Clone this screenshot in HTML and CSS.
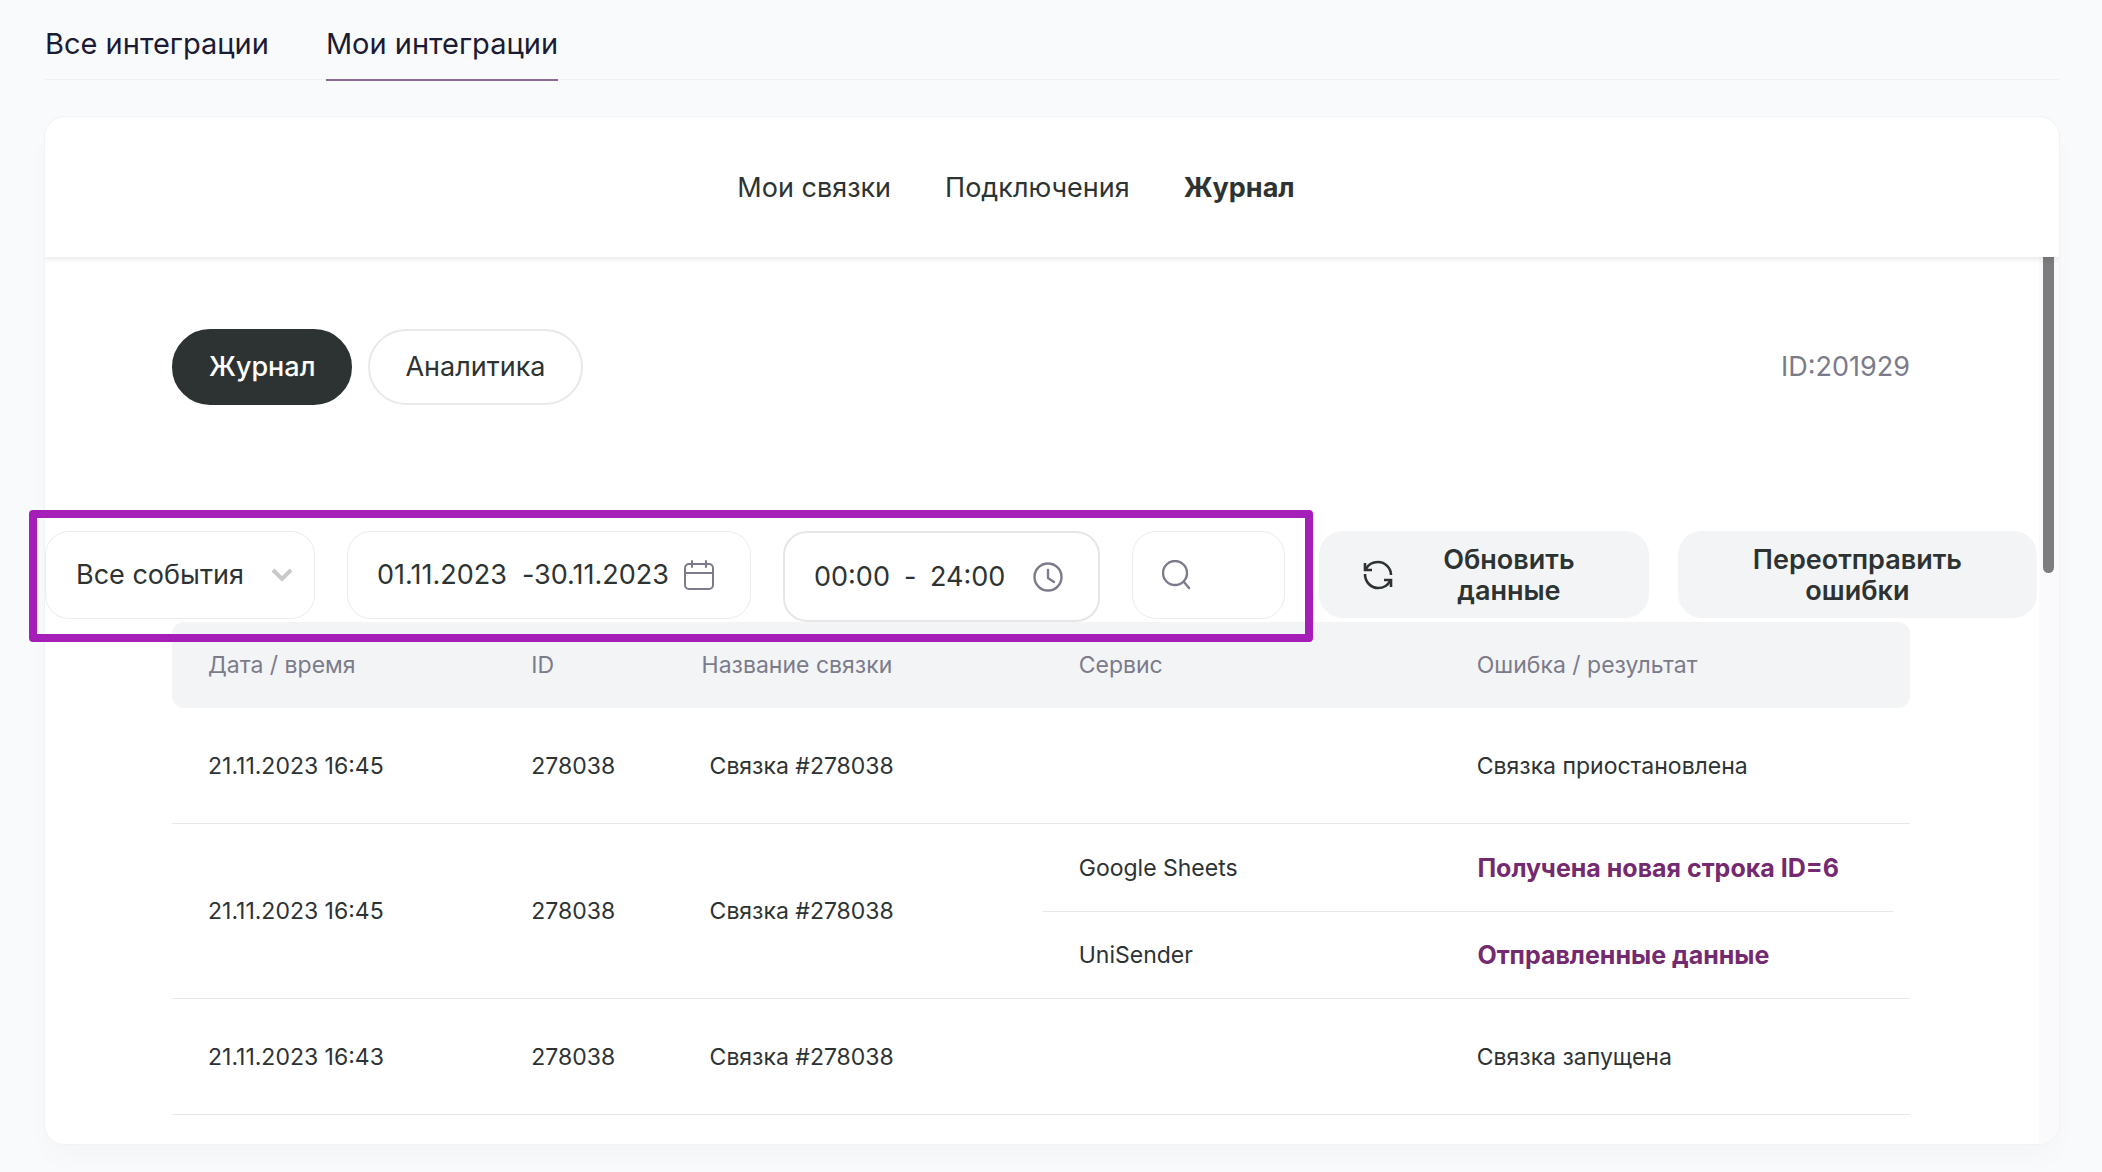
FILE: index.html
```html
<!doctype html>
<html lang="ru">
<head>
<meta charset="utf-8">
<title>Мои интеграции - Журнал</title>
<link rel="stylesheet" href="styles.css">
</head>
<body>
<nav class="tabs">
	<a class="tab" href="#all">Все интеграции</a>
	<a class="tab active" href="#my">Мои интеграции</a>
</nav>

<main class="card">
	<nav class="menu">
		<a href="#links">Мои связки</a>
		<a href="#connections">Подключения</a>
		<a class="current" href="#log">Журнал</a>
	</nav>

	<div class="scroll">
		<div class="content">
			<div class="top">
				<button class="pill dark" type="button">Журнал</button>
				<button class="pill" type="button">Аналитика</button>
				<span class="account">ID:201929</span>
			</div>

			<form class="toolbar">
				<div class="filters">
					<div class="field events">
						<select aria-label="События">
							<option>Все события</option>
						</select>
						<svg class="chevron" viewBox="0 0 22 14" fill="none" stroke="#c9c9cc" stroke-width="4"><path d="M2 2l9 9 9-9"/></svg>
					</div>
					<div class="field dates">
						<input class="date" type="text" value="01.11.2023" aria-label="Дата с">
						<span>-</span>
						<input class="date" type="text" value="30.11.2023" aria-label="Дата по">
						<svg class="icon" viewBox="0 0 30 30" fill="none" stroke="#7b7b8b" stroke-width="2" stroke-linecap="round"><rect x="1" y="4" width="28" height="25" rx="4"/><path d="M1 13h28M8 1v6M22 1v6"/></svg>
					</div>
					<div class="field time">
						<input class="hour" type="text" value="00:00" aria-label="Время с">
						<span>-</span>
						<input class="hour" type="text" value="24:00" aria-label="Время по">
						<svg class="icon" viewBox="0 0 30 30" fill="none" stroke="#7b7b8b" stroke-width="2.4" stroke-linecap="round" stroke-linejoin="round"><circle cx="15" cy="15" r="13.5"/><path d="M15 8v8l6 4"/></svg>
					</div>
					<div class="field search">
						<svg class="icon" viewBox="0 0 30 30" fill="none" stroke="#7b7b8b" stroke-width="2.4" stroke-linecap="round"><circle cx="13" cy="13" r="12"/><path d="M22 22l5 6"/></svg>
						<input type="search" aria-label="Поиск">
					</div>
				</div>
				<button class="action refresh" type="button">
					<svg class="icon" viewBox="0 0 30 30" fill="none" stroke="#2d3333" stroke-width="2.6"><path d="M2 3v7h7M28 27v-7h-7"/><path d="M3 9C5 5 9 2 15 2c7 0 13 6 13 13M27 21c-2 4-6 7-12 7C8 28 2 22 2 14"/></svg>
					<span>Обновить данные</span>
				</button>
				<button class="action resend" type="button"><span>Переотправить ошибки</span></button>
			</form>

			<table class="log">
				<thead>
					<tr>
						<th class="c1">Дата / время</th>
						<th class="c2">ID</th>
						<th class="c3">Название связки</th>
						<th class="c4">Сервис</th>
						<th class="c5">Ошибка / результат</th>
					</tr>
				</thead>
				<tbody>
					<tr>
						<td>21.11.2023 16:45</td>
						<td>278038</td>
						<td class="name">Связка #278038</td>
						<td></td>
						<td>Связка приостановлена</td>
					</tr>
					<tr>
						<td>21.11.2023 16:45</td>
						<td>278038</td>
						<td class="name">Связка #278038</td>
						<td class="steps" colspan="2">
							<div class="step"><span>Google Sheets</span><a href="#row">Получена новая строка ID=6</a></div>
							<div class="step"><span>UniSender</span><a href="#data">Отправленные данные</a></div>
						</td>
					</tr>
					<tr>
						<td>21.11.2023 16:43</td>
						<td>278038</td>
						<td class="name">Связка #278038</td>
						<td></td>
						<td>Связка запущена</td>
					</tr>
				</tbody>
			</table>
		</div>
		<div class="track"><div class="thumb"></div></div>
	</div>
</main>
</body>
</html>
```

FILE: styles.css
```css
* {box-sizing:border-box; }
body {margin:0; padding:0 43px 28px 45px; background-color:#f9fafc; color:#2d3333; font:27px/32px Inter,"Liberation Sans",sans-serif; }
a {color:inherit; text-decoration:none; }
button, input, select {margin:0; padding:0; border:0; background:none; color:inherit; font:inherit; }
button {cursor:pointer; }
svg {flex:none; display:block; }

.tabs {display:flex; gap:57px; height:80px; border-bottom:1px solid #f0f1f4; }
.tab {height:81px; padding-top:28px; color:#1b1b33; font-size:29px; }
.tab.active {border-bottom:2px solid #8d6a94; }

.card {margin-top:37px; border-radius:20px; background-color:#fff; box-shadow:0 0 0 1px #f1f2f4, 0 16px 24px rgba(0,0,0,.02); }
.menu {display:flex; justify-content:center; gap:54px; padding:55px 72px 53px 0; box-shadow:0 2px 6px rgba(0,0,0,.1); clip-path:inset(0 0 -10px 0); }
.menu .current {font-weight:700; }

.scroll {display:flex; }
.content {flex:1; min-width:0; padding-bottom:29px; }
.track {width:20px; padding-left:4px; border-radius:0 0 20px 0; background-color:#fafafc; }
.thumb {width:11px; height:316px; border-radius:0 0 6px 6px; background-color:#7d7d7f; }

.top {display:flex; align-items:center; gap:16px; padding:72px 129px 126px 127px; }
.pill {height:76px; padding:0 35px; border:2px solid #e9e9ea; border-radius:38px; }
.pill.dark {border-color:#2d3333; background-color:#2d3333; color:#fff; font-weight:500; }
.account {margin-left:auto; color:#7b7b8b; }

.toolbar {display:flex; align-items:flex-start; height:91px; padding-right:2px; }
/* purple frame over the filters */
.filters {position:relative; display:flex; align-items:flex-start; gap:32px; margin-right:34px; }
.filters::after {content:""; position:absolute; top:-21px; right:-28px; bottom:-20px; left:-16px; border:8px solid #a51eb8; border-radius:4px; pointer-events:none; }
.field {display:flex; align-items:center; height:88px; border:1px solid #ececee; border-radius:24px; background-color:#fff; }
.events {position:relative; width:270px; }
.events select {width:100%; height:100%; padding-left:30px; appearance:none; outline:none; }
.chevron {position:absolute; right:21px; width:22px; height:14px; pointer-events:none; }
.dates {width:404px; padding-left:29px; }
.date {width:145px; }
.dates .date + .icon {margin-left:5px; }
.dates span {width:12px; }
.time {width:317px; height:91px; padding-left:29px; border:2px solid #e6e6e8; }
.hour {width:90px; }
.time span {width:26px; }
.time .icon {margin-left:13px; }
.search {width:153px; padding-left:29px; }
.search input {width:80px; }
.icon {width:30px; height:30px; }
.action {display:flex; align-items:center; justify-content:center; height:87px; border-radius:24px; background-color:#f3f4f6; font-weight:600; line-height:31px; text-align:center; }
.refresh {flex:331; padding:0 64px 0 44px; margin-right:29px; }
.refresh span {flex:1; padding-left:40px; }
.resend {flex:357; padding:0 60px; }

.log {width:calc(100% - 256px); margin-left:127px; border-collapse:separate; border-spacing:0; table-layout:fixed; font-size:23px; text-align:left; }
.log th {height:86px; padding:0 0 0 36px; background-color:#f3f4f6; color:#7b7b8b; font-weight:400; }
.log td {height:116px; padding:0 0 0 36px; border-bottom:1px solid #e8e8ea; }
.log th:first-child {border-radius:12px 0 0 12px; }
.log th:last-child {border-radius:0 12px 12px 0; }
.log .name {padding-left:44px; }
.log .steps {padding:0 17px 0 0; }
.c1 {width:18.6%; }
.c2 {width:9.8%; }
.c3 {width:21.7%; }
.c4 {width:22.9%; }
.step {display:grid; grid-template-columns:399fr 452fr; align-items:center; height:87px; }
.step + .step {border-top:1px solid #e8e8ea; }
.step span, .step a {padding-left:36px; }
.step a {color:#742a70; font-size:25px; font-weight:700; }
```
